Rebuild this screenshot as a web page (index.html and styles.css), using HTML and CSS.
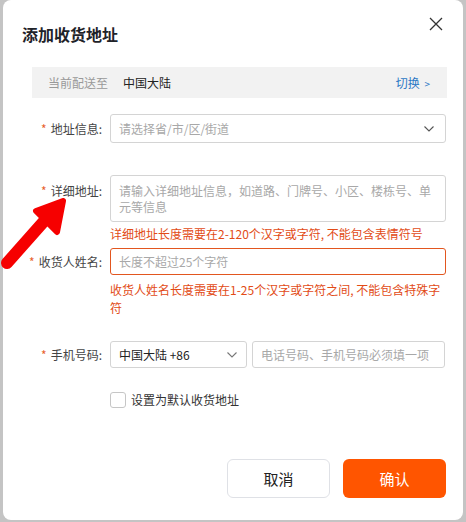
FILE: index.html
```html
<!DOCTYPE html>
<html lang="zh-CN">
<head>
    <meta charset="UTF-8">
    <title>添加收货地址</title>
    <link rel="stylesheet" href="styles.css">
</head>
<body>
    <div class="dialog">
        <div class="dialog-header">
            <h2>添加收货地址</h2>
            <span class="close">
                <svg width="14" height="14" viewBox="0 0 14 14"><path d="M1 1L13 13M13 1L1 13" stroke="#333" stroke-width="1.3" fill="none"/></svg>
            </span>
        </div>

        <div class="dialog-body">
            <div class="region-bar">
                <span class="region-tip">当前配送至</span>
                <span class="region-name">中国大陆</span>
                <a class="region-switch">切换 <small>&gt;</small></a>
            </div>

            <form class="address-form">
                <div class="form-item item-area">
                    <label><i>*</i>地址信息:</label>
                    <div class="control select">
                        <span class="placeholder">请选择省/市/区/街道</span>
                        <svg class="arrow" width="10" height="6" viewBox="0 0 10 6"><path d="M0.5 0.5L5 5L9.5 0.5" stroke="#555" stroke-width="1.1" fill="none"/></svg>
                    </div>
                </div>

                <div class="form-item item-detail">
                    <label class="top"><i>*</i>详细地址:</label>
                    <div class="field">
                        <div class="control textarea">
                            <span class="placeholder">请输入详细地址信息，如道路、门牌号、小区、楼栋号、单元等信息</span>
                        </div>
                        <div class="error">详细地址长度需要在2-120个汉字或字符, 不能包含表情符号</div>
                    </div>
                </div>

                <div class="form-item item-name">
                    <label class="top"><i>*</i>收货人姓名:</label>
                    <div class="field">
                        <div class="control input invalid">
                            <span class="placeholder">长度不超过25个字符</span>
                        </div>
                        <div class="error">收货人姓名长度需要在1-25个汉字或字符之间, 不能包含特殊字符</div>
                    </div>
                </div>

                <div class="form-item item-phone">
                    <label><i>*</i>手机号码:</label>
                    <div class="phone-group">
                        <div class="control select code">
                            <span class="value">中国大陆 +86</span>
                            <svg class="arrow" width="10" height="6" viewBox="0 0 10 6"><path d="M0.5 0.5L5 5L9.5 0.5" stroke="#777" stroke-width="1.1" fill="none"/></svg>
                        </div>
                        <div class="control input number">
                            <span class="placeholder">电话号码、手机号码必须填一项</span>
                        </div>
                    </div>
                </div>

                <div class="form-item item-default">
                    <label></label>
                    <span class="checkbox"></span>
                    <span class="checkbox-text">设置为默认收货地址</span>
                </div>
            </form>
        </div>

        <div class="dialog-footer">
            <button type="button" class="btn btn-cancel">取消</button>
            <button type="button" class="btn btn-ok">确认</button>
        </div>

        <!-- red pointer drawn over the form -->
        <svg class="pointer" width="80" height="280" viewBox="0 0 80 280">
            <path d="M7 263L46 219" stroke="#f60000" stroke-width="12" stroke-linecap="round" fill="none"/>
            <path d="M63 201L36 211L57 232Z" fill="#f60000" stroke="#f60000" stroke-width="6" stroke-linejoin="round"/>
        </svg>
    </div>
</body>
</html>
```

FILE: styles.css
```css
body {
    margin: 0;
    padding: 0;
    background: #c4c4c4;
    font-family: "Noto Sans CJK SC", "Noto Sans", sans-serif;
    font-size: 12px;
    color: #333;
}

.dialog {
    position: relative;
    margin-left: 3px;
    width: 460px;
    height: 520px;
    background: #fff;
    border-radius: 8px;
    padding-top: 22px;
    box-sizing: border-box;
}

.dialog-header {
    padding-left: 19px;
}

.dialog-header h2 {
    margin: 0;
    font-size: 16px;
    line-height: 24px;
    font-weight: bold;
    color: #1f2329;
}

.close {
    position: absolute;
    top: 17px;
    right: 20px;
    width: 14px;
    height: 14px;
}

.close svg {
    display: block;
}

.dialog-body {
    padding: 0 16px 0 29px;
}

.region-bar {
    margin-top: 21px;
    height: 31px;
    line-height: 31px;
    background: #f2f2f2;
    padding: 0 17px 0 16px;
    display: flex;
}

.region-tip {
    color: #999;
}

.region-name {
    margin-left: 15px;
    color: #222;
}

.region-switch {
    margin-left: auto;
    color: #2b78c5;
}

.region-switch small {
    font-size: 10px;
    margin-left: 2px;
}

.address-form {
    margin-right: 1px;
}

.form-item {
    display: flex;
    align-items: center;
}

.form-item label {
    flex: 0 0 78px;
    min-width: 0;
    box-sizing: border-box;
    padding-right: 8px;
    display: flex;
    justify-content: flex-end;
    color: #444;
    white-space: nowrap;
}

.form-item label i {
    font-style: normal;
    color: #e8602c;
    margin-right: 4px;
}

.form-item label.top {
    align-self: flex-start;
    padding-top: 7px;
    line-height: 18px;
}

.field {
    flex: 1;
}

.control {
    box-sizing: border-box;
    border: 1px solid #d4d4d4;
    border-radius: 3px;
    background: #fff;
    padding-left: 8px;
    display: flex;
    align-items: center;
}

.placeholder {
    color: #a8a8a8;
}

.select .arrow {
    margin-left: auto;
    margin-right: 11px;
}

.item-area {
    margin-top: 16px;
}

.item-area .control {
    flex: 1;
    height: 29px;
}

.item-detail {
    margin-top: 32px;
}

.textarea {
    height: 47px;
    align-items: flex-start;
    padding: 7px 8px 0 8px;
    line-height: 16px;
}

.error {
    color: #e24b16;
    line-height: 18px;
}

.item-detail .error {
    margin-top: 3px;
}

.item-name {
    margin-top: 5px;
}

.item-name label.top {
    padding-top: 0;
    line-height: 27px;
}

.input {
    height: 27px;
}

.input.invalid {
    border-color: #e2561f;
}

.item-name .error {
    margin-top: 6px;
}

.item-phone {
    margin-top: 24px;
}

.phone-group {
    flex: 1;
    display: flex;
    gap: 5px;
}

.code {
    width: 137px;
    height: 27px;
}

.code .value {
    color: #222;
}

.code .arrow {
    margin-right: 9px;
}

.number {
    flex: 1;
    height: 27px;
    margin-right: 1px;
}

.item-default {
    margin-top: 23px;
}

.checkbox {
    width: 16px;
    height: 16px;
    box-sizing: border-box;
    border: 1px solid #c6c6c6;
    border-radius: 3px;
}

.checkbox-text {
    margin-left: 5px;
    color: #333;
}

.dialog-footer {
    position: absolute;
    left: 0;
    right: 0;
    top: 459px;
    display: flex;
    justify-content: flex-end;
    gap: 13px;
    padding-right: 17px;
}

.btn {
    width: 103px;
    height: 39px;
    border-radius: 6px;
    font-family: "Noto Sans CJK SC", sans-serif;
    font-size: 15px;
    cursor: pointer;
}

.btn-cancel {
    background: #fff;
    border: 1px solid #dfe1e6;
    color: #222;
}

.btn-ok {
    background: #ff5500;
    border: none;
    color: #fff;
}

.pointer {
    position: absolute;
    left: -3px;
    top: 0;
    pointer-events: none;
}
```
